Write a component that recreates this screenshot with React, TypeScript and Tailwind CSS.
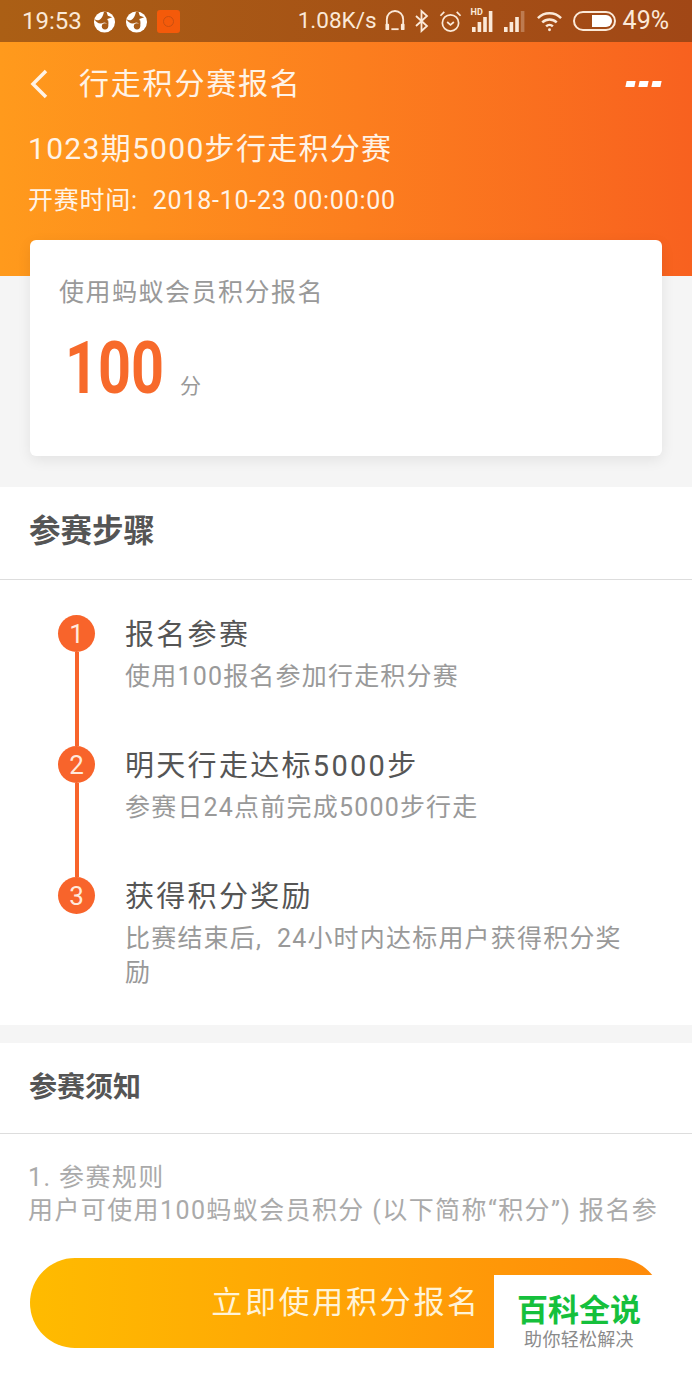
const STEPS = [
  { n: 1, title: "报名参赛", desc: "使用100报名参加行走积分赛" },
  { n: 2, title: "明天行走达标5000步", desc: "参赛日24点前完成5000步行走" },
  { n: 3, title: "获得积分奖励", desc: "比赛结束后,\u00a0 24小时内达标用户获得积分奖励" },
];

function AppBadge() {
  return (
    <svg viewBox="0 0 24 24" className="size-[23px]">
      <circle cx="12" cy="12.500" r="11" fill="#fff" />
      <path d="M1.500 9.500C6 13 10 9 11.500 1.500L14 1.800 15.500 6 20 7.500 15 9.500 16 14 11.500 13C8 15.500 3.500 14 1.500 9.500Z" fill="#a85c18" />
      <circle cx="12.500" cy="17" r="3.300" fill="#a85c18" />
      <path d="M15 17V11" stroke="#a85c18" strokeWidth="2" />
    </svg>
  );
}

function Signal({ bars }: { bars: number }) {
  const hs = [5, 10, 15, 21];
  return (
    <svg viewBox="0 0 22 21" className="h-[21px] w-[22px]" fill="#fbe9d8">
      {hs.map((h, i) => (
        <rect key={i} x={i * 5.600} y={21 - h} width="3.600" height={h} opacity={i < bars ? 1 : 0.3} />
      ))}
    </svg>
  );
}

function StatusBar() {
  return (
    <div className="flex h-[42px] items-center bg-gradient-to-r from-[#ab5f15] to-[#a14716] pl-[22px] pr-[23px] text-[24px] text-[#fbe9d8]">
      <span>19:53</span>
      <div className="ml-[11px] flex items-center gap-[9px]">
        <AppBadge />
        <AppBadge />
        <div className="flex size-[23px] items-center justify-center rounded-[3px] bg-[#f45a0a]">
          <div className="size-[11px] rounded-full border border-[#c9500f]" />
        </div>
      </div>
      <span className="ml-auto text-[22.500px]">1.08K/s</span>
      <div className="ml-[8px] flex items-center gap-[10px]">
        <svg viewBox="0 0 22 24" className="h-[24px] w-[20px]" fill="none" stroke="#fbe9d8" strokeWidth="2">
          <path d="M2 17V10a9 9 0 0 1 18 0v7" />
          <rect x="0.500" y="15" width="4" height="7" rx="1" fill="#fbe9d8" stroke="none" />
          <rect x="17.500" y="15" width="4" height="7" rx="1" fill="#fbe9d8" stroke="none" />
          <path d="M7 21h8" />
        </svg>
        <svg viewBox="0 0 14 24" className="h-[24px] w-[14px]" fill="none" stroke="#fbe9d8" strokeWidth="1.800">
          <path d="M1 7l11 10-5.500 5V2L12 7 1 17" />
        </svg>
        <svg viewBox="0 0 24 24" className="size-[23px]" fill="none" stroke="#fbe9d8" strokeWidth="1.800">
          <circle cx="12" cy="13.500" r="8.500" />
          <path d="M8.500 12.500l3.500 3 3.500-3M1.500 6l4-4M22.500 6l-4-4" />
        </svg>
        <div className="relative">
          <span className="absolute -left-[1px] -top-[3px] text-[9px] font-bold leading-none">HD</span>
          <Signal bars={4} />
        </div>
        <Signal bars={3} />
        <svg viewBox="0 0 28 22" className="h-[22px] w-[27px]" fill="none" stroke="#fbe9d8" strokeWidth="2.600">
          <path d="M2 8a17 17 0 0 1 24 0M6.500 12.500a11 11 0 0 1 15 0M10.500 16.500a5 5 0 0 1 7 0" />
          <circle cx="14" cy="20" r="1.500" fill="#fbe9d8" stroke="none" />
        </svg>
        <div className="flex h-[20px] w-[43px] items-center justify-end rounded-full border-2 border-[#fbe9d8] p-[2px]">
          <div className="h-full w-[20px] rounded-l-[2px] rounded-r-full bg-white" />
        </div>
      </div>
      <span className="ml-[7px] text-[25px]">49%</span>
    </div>
  );
}

function Hero() {
  return (
    <div className="h-[234px] bg-gradient-to-r from-[#ff9a1c] to-[#f8611f] px-[28px] text-[#fff3e6]">
      <div className="relative flex h-[84px] items-center">
        <svg viewBox="0 0 20 30" className="ml-[1px] h-[30px] w-[20px]" fill="none" stroke="#fff3e6" strokeWidth="3.500">
          <path d="M17 2L4 15l13 13" />
        </svg>
        <h1 className="-mt-[2px] ml-[30px] text-[30px] tracking-[1.800px]">行走积分赛报名</h1>
        <div className="absolute right-[3px] top-[39px] flex gap-[4px]">
          <i className="h-[6px] w-[9px] -skew-x-12 bg-white" />
          <i className="h-[6px] w-[9px] -skew-x-12 bg-white" />
          <i className="h-[6px] w-[9px] -skew-x-12 bg-white" />
        </div>
      </div>
      <div className="mt-[1px] text-[30px] leading-[44px] tracking-[1.300px]">1023期5000步行走积分赛</div>
      <div className="mt-[10px] text-[25px] leading-[40px] tracking-[0.750px]">
        开赛时间<span className="mr-[8px]">:</span> 2018-10-23 00:00:00
      </div>
    </div>
  );
}

function Steps() {
  return (
    <div className="px-[58px] pb-[35px] pt-[35px]">
      {STEPS.map((s, i) => (
        <div key={s.n} className="flex gap-[30px]">
          <div className="flex w-[37px] shrink-0 flex-col items-center">
            <div className="flex size-[37px] shrink-0 items-center justify-center rounded-full bg-[#f8642b] text-[26px] leading-none text-[#ffe9dc]">
              {s.n}
            </div>
            {i < STEPS.length - 1 && <div className="w-[4px] flex-1 bg-[#f8642b]" />}
          </div>
          <div className={i < STEPS.length - 1 ? "h-[131px]" : ""}>
            <div className="text-[29px] leading-[40px] tracking-[2.300px] text-[#555]">{s.title}</div>
            <div className="mt-[5px] w-[505px] text-[25px] leading-[34px] tracking-[1.200px] text-[#999]">{s.desc}</div>
          </div>
        </div>
      ))}
    </div>
  );
}

export default function App() {
  return (
    <div className="relative h-[1384px] w-[692px] overflow-hidden bg-white font-['Roboto','Noto_Sans_CJK_SC',sans-serif]">
      <StatusBar />
      <Hero />
      <div className="flex flex-col bg-[#f5f5f5] pb-[31px]">
        <div className="relative mx-[30px] -mt-[36px] flex h-[216px] flex-col rounded-[6px] bg-white px-[29px] pt-[33px] shadow-[0_4px_14px_rgba(0,0,0,0.08)]">
          <div className="text-[25px] leading-[40px] tracking-[1.500px] text-[#999]">使用蚂蚁会员积分报名</div>
          <div className="mt-[16px] flex items-baseline gap-[15px] pl-[6px]">
            <span className="inline-block w-[100px] origin-left scale-x-[0.8] whitespace-nowrap text-[72px] font-bold leading-[80px] text-[#f76a2b]">100</span>
            <span className="text-[21px] text-[#999]">分</span>
          </div>
        </div>
      </div>
      <h2 className="flex h-[93px] items-center border-b border-[#ddd] px-[29px] pb-[2px] text-[31.500px] font-bold text-[#555]">参赛步骤</h2>
      <Steps />
      <div className="h-[18px] bg-[#f5f5f5]" />
      <h2 className="flex h-[91px] items-center border-b border-[#ddd] px-[29px] text-[28px] font-bold text-[#555]">参赛须知</h2>
      <div className="whitespace-nowrap px-[28px] pt-[27px] text-[25px] leading-[33px] tracking-[1.400px] text-[#aaa]">
        <div>1. 参赛规则</div>
        <div>用户可使用100蚂蚁会员积分 (以下简称“积分”) 报名参</div>
      </div>

      <div className="absolute inset-x-0 bottom-0 flex h-[156px] justify-center bg-white pt-[30px]">
        <button className="flex h-[90px] w-[632px] items-center justify-center rounded-full bg-gradient-to-r from-[#ffbb00] to-[#ff8a0a] text-[31px] tracking-[2.700px] text-[#fff3d8]">
          立即使用积分报名
        </button>
      </div>

      <div className="absolute left-[494px] top-[1275px] flex h-[78px] w-[170px] flex-col items-center bg-white pt-[18px]">
        <div className="text-[31px] font-bold leading-[36px] text-[#15c03c]">百科全说</div>
        <div className="text-[18px] leading-[22px] tracking-[0.300px] text-[#8a8a8a]">助你轻松解决</div>
      </div>
    </div>
  );
}
